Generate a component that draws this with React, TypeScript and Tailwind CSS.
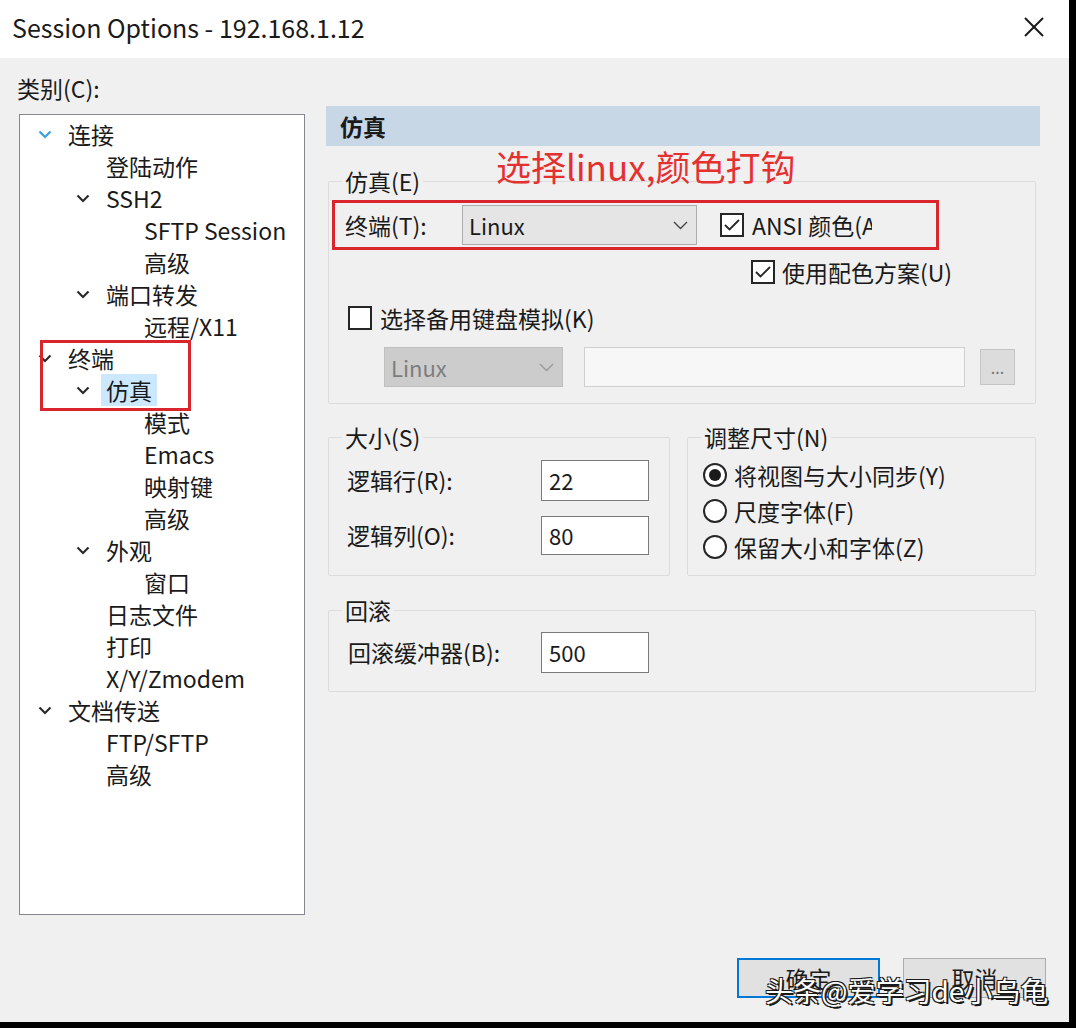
import React from 'react';

type Node = { level: 0 | 1 | 2; label: string; chevron?: 'blue' | 'dark'; selected?: boolean };

const tree: Node[] = [
  { level: 0, label: '连接', chevron: 'blue' },
  { level: 1, label: '登陆动作' },
  { level: 1, label: 'SSH2', chevron: 'dark' },
  { level: 2, label: 'SFTP Session' },
  { level: 2, label: '高级' },
  { level: 1, label: '端口转发', chevron: 'dark' },
  { level: 2, label: '远程/X11' },
  { level: 0, label: '终端', chevron: 'dark' },
  { level: 1, label: '仿真', chevron: 'dark', selected: true },
  { level: 2, label: '模式' },
  { level: 2, label: 'Emacs' },
  { level: 2, label: '映射键' },
  { level: 2, label: '高级' },
  { level: 1, label: '外观', chevron: 'dark' },
  { level: 2, label: '窗口' },
  { level: 1, label: '日志文件' },
  { level: 1, label: '打印' },
  { level: 1, label: 'X/Y/Zmodem' },
  { level: 0, label: '文档传送', chevron: 'dark' },
  { level: 1, label: 'FTP/SFTP' },
  { level: 1, label: '高级' },
];

const indent = ['pl-[16px]', 'pl-[54px]', 'pl-[92px]'];

function Chevron({ color = '#2b2b2b' }: { color?: string }) {
  return (
    <svg width="14" height="9" viewBox="0 0 14 9" className="ml-[2px]">
      <polyline points="1.5,1.5 7,7 12.5,1.5" fill="none" stroke={color} strokeWidth="2.2" />
    </svg>
  );
}

function Check({ checked }: { checked?: boolean }) {
  return (
    <div className="w-[24px] h-[24px] border-2 border-[#262626] bg-white flex items-center justify-center shrink-0">
      {checked && (
        <svg width="18" height="14" viewBox="0 0 18 14">
          <polyline points="2,7 6.5,11.5 16,2" fill="none" stroke="#262626" strokeWidth="1.8" />
        </svg>
      )}
    </div>
  );
}

function Radio({ on }: { on?: boolean }) {
  return (
    <div className="w-[24px] h-[24px] rounded-full border-2 border-[#262626] bg-white flex items-center justify-center shrink-0">
      {on && <div className="w-[12px] h-[12px] rounded-full bg-[#1a1a1a]" />}
    </div>
  );
}

function Group({
  title,
  className,
  inner,
  children,
}: {
  title: string;
  className?: string;
  inner?: string;
  children: React.ReactNode;
}) {
  return (
    <fieldset className={`border border-[#dcdcdc] rounded-[2px] ${className ?? ''}`}>
      <legend className="ml-[13px] px-[3px] text-[23px] leading-[28px]">{title}</legend>
      <div className={inner}>{children}</div>
    </fieldset>
  );
}

function TextBox({ value, h = 'h-[41px]' }: { value: string; h?: string }) {
  return (
    <div className={`w-[108px] ${h} border border-[#7a7a7a] bg-white flex items-center pl-[7px] text-[22px]`}>{value}</div>
  );
}

export default function App() {
  return (
    <div
      className="w-[1076px] h-[1028px] bg-black overflow-hidden text-[#1a1a1a] text-[23px]"
      style={{ fontFamily: '"Noto Sans CJK SC", "Noto Sans", sans-serif' }}
    >
      <div className="relative w-[1069px] h-[1022px] bg-[#f0f0f0] flex flex-col">
        {/* title bar */}
        <div className="h-[58px] bg-white flex items-center justify-between pl-[12px] pr-[24px] shrink-0">
          <span className="text-[25px] leading-none -mt-[4px]">Session Options - 192.168.1.12</span>
          <svg width="22" height="22" viewBox="0 0 22 22" className="-mt-[4px]">
            <line x1="2" y1="2" x2="20" y2="20" stroke="#1a1a1a" strokeWidth="2" />
            <line x1="20" y1="2" x2="2" y2="20" stroke="#1a1a1a" strokeWidth="2" />
          </svg>
        </div>

        <div className="flex flex-1">
          {/* left column */}
          <div className="w-[286px] ml-[19px] pt-[15px] flex flex-col">
            <div className="leading-[30px] -ml-[2px]">类别(C):</div>
            <div className="relative mt-[11px] h-[801px] bg-white border border-[#828790] pt-[3px]">
              {tree.map((n, i) => (
                <div key={i} className={`h-[32px] flex items-center ${indent[n.level]}`}>
                  <div className="w-[32px] flex items-center">
                    {n.chevron && <Chevron color={n.chevron === 'blue' ? '#3a9ee4' : '#2b2b2b'} />}
                  </div>
                  <span
                    className={`leading-[32px] whitespace-nowrap ${
                      n.selected ? 'bg-[#cce8ff] -ml-[5px] px-[5px]' : ''
                    }`}
                  >
                    {n.label}
                  </span>
                </div>
              ))}
              <div className="absolute left-[20px] top-[225px] w-[151px] h-[71px] border-[3px] border-[#d9262c]" />
            </div>
          </div>

          {/* right column */}
          <div className="relative w-[714px] ml-[21px] pt-[48px] flex flex-col">
            <div className="h-[40px] bg-[#c8d7e6] flex items-center pl-[14px] font-bold">仿真</div>

            <div className="ml-[2px] mr-[4px] mt-[21px]">
              <Group title="仿真(E)" inner="pl-[16px] pb-[16px]">
                <div className="mt-[10px] h-[40px] flex items-center">
                  <span className="w-[117px]">终端(T):</span>
                  <div className="w-[235px] h-[40px] bg-[#e5e5e5] border border-[#adadad] flex items-center justify-between pl-[6px] pr-[8px] text-[22px]">
                    <span>Linux</span>
                    <svg width="15" height="9" viewBox="0 0 15 9">
                      <polyline points="1,1 7.5,7.5 14,1" fill="none" stroke="#444" strokeWidth="1.4" />
                    </svg>
                  </div>
                  <div className="ml-[23px] flex items-center gap-[8px]">
                    <Check checked />
                    <span className="w-[120px] overflow-hidden whitespace-nowrap">ANSI 颜色(A)</span>
                  </div>
                </div>
                <div className="mt-[15px] h-[24px] flex items-center pl-[406px] gap-[7px]">
                  <Check checked />
                  <span>使用配色方案(U)</span>
                </div>
                <div className="mt-[22px] h-[24px] flex items-center pl-[3px] gap-[8px]">
                  <Check />
                  <span>选择备用键盘模拟(K)</span>
                </div>
                <div className="mt-[17px] h-[40px] flex items-center pl-[39px]">
                  <div className="w-[179px] h-[40px] bg-[#cccccc] border border-[#bfbfbf] flex items-center justify-between pl-[6px] pr-[8px] text-[22px] text-[#7d7d7d]">
                    <span>Linux</span>
                    <svg width="15" height="9" viewBox="0 0 15 9">
                      <polyline points="1,1 7.5,7.5 14,1" fill="none" stroke="#9a9a9a" strokeWidth="1.4" />
                    </svg>
                  </div>
                  <div className="ml-[21px] w-[381px] h-[40px] bg-[#f7f7f7] border border-[#cfcfcf]" />
                  <div className="ml-[15px] w-[35px] h-[36px] bg-[#dcdcdc] border border-[#c4c4c4] flex items-center justify-center text-[16px] text-[#777]">
                    ...
                  </div>
                </div>
              </Group>

              <div className="mt-[19px] flex gap-[17px]">
                <Group title="大小(S)" className="w-[342px]" inner="pl-[18px] pb-[20px]">
                  <div className="mt-[9px] flex items-center">
                    <span className="w-[194px]">逻辑行(R):</span>
                    <TextBox value="22" />
                  </div>
                  <div className="mt-[15px] flex items-center">
                    <span className="w-[194px]">逻辑列(O):</span>
                    <TextBox value="80" h="h-[39px]" />
                  </div>
                </Group>
                <Group title="调整尺寸(N)" className="flex-1" inner="pl-[15px] pb-[10px]">
                  <div className="mt-[6px] flex flex-col">
                    {[
                      ['将视图与大小同步(Y)', true],
                      ['尺度字体(F)', false],
                      ['保留大小和字体(Z)', false],
                    ].map(([t, on]) => (
                      <div key={t as string} className="h-[36px] flex items-center gap-[7px]">
                        <Radio on={on as boolean} />
                        <span>{t as string}</span>
                      </div>
                    ))}
                  </div>
                </Group>
              </div>

              <Group title="回滚" className="mt-[20px]" inner="pl-[19px] pb-[18px]">
                <div className="mt-[8px] flex items-center">
                  <span className="w-[193px]">回滚缓冲器(B):</span>
                  <TextBox value="500" />
                </div>
              </Group>
            </div>

            {/* annotation overlays */}
            <div className="absolute left-[170px] top-[86px] text-[35px] leading-[44px] text-[#e53030] whitespace-nowrap">
              选择linux,颜色打钩
            </div>
            <div className="absolute left-[6px] top-[142px] w-[607px] h-[50px] border-[3px] border-[#d9262c]" />
          </div>
        </div>

        {/* buttons */}
        <div className="h-[64px] flex items-start justify-end gap-[23px] pr-[23px] shrink-0">
          <div className="w-[143px] h-[40px] bg-[#e1e1e1] border-2 border-[#0078d7] flex items-center justify-center">
            确定
          </div>
          <div className="w-[143px] h-[40px] bg-[#e1e1e1] border border-[#adadad] flex items-center justify-center">
            取消
          </div>
        </div>

        {/* watermark */}
        <div
          className="absolute left-[765px] top-[970px] text-[28px] leading-[40px] text-white whitespace-nowrap"
          style={{ textShadow: '2px 2px 0 #1a1a1a, -1px -1px 0 #1a1a1a, 1px -1px 0 #1a1a1a, -1px 1px 0 #1a1a1a' }}
        >
          头条@爱学习de小乌龟
        </div>
      </div>
    </div>
  );
}
